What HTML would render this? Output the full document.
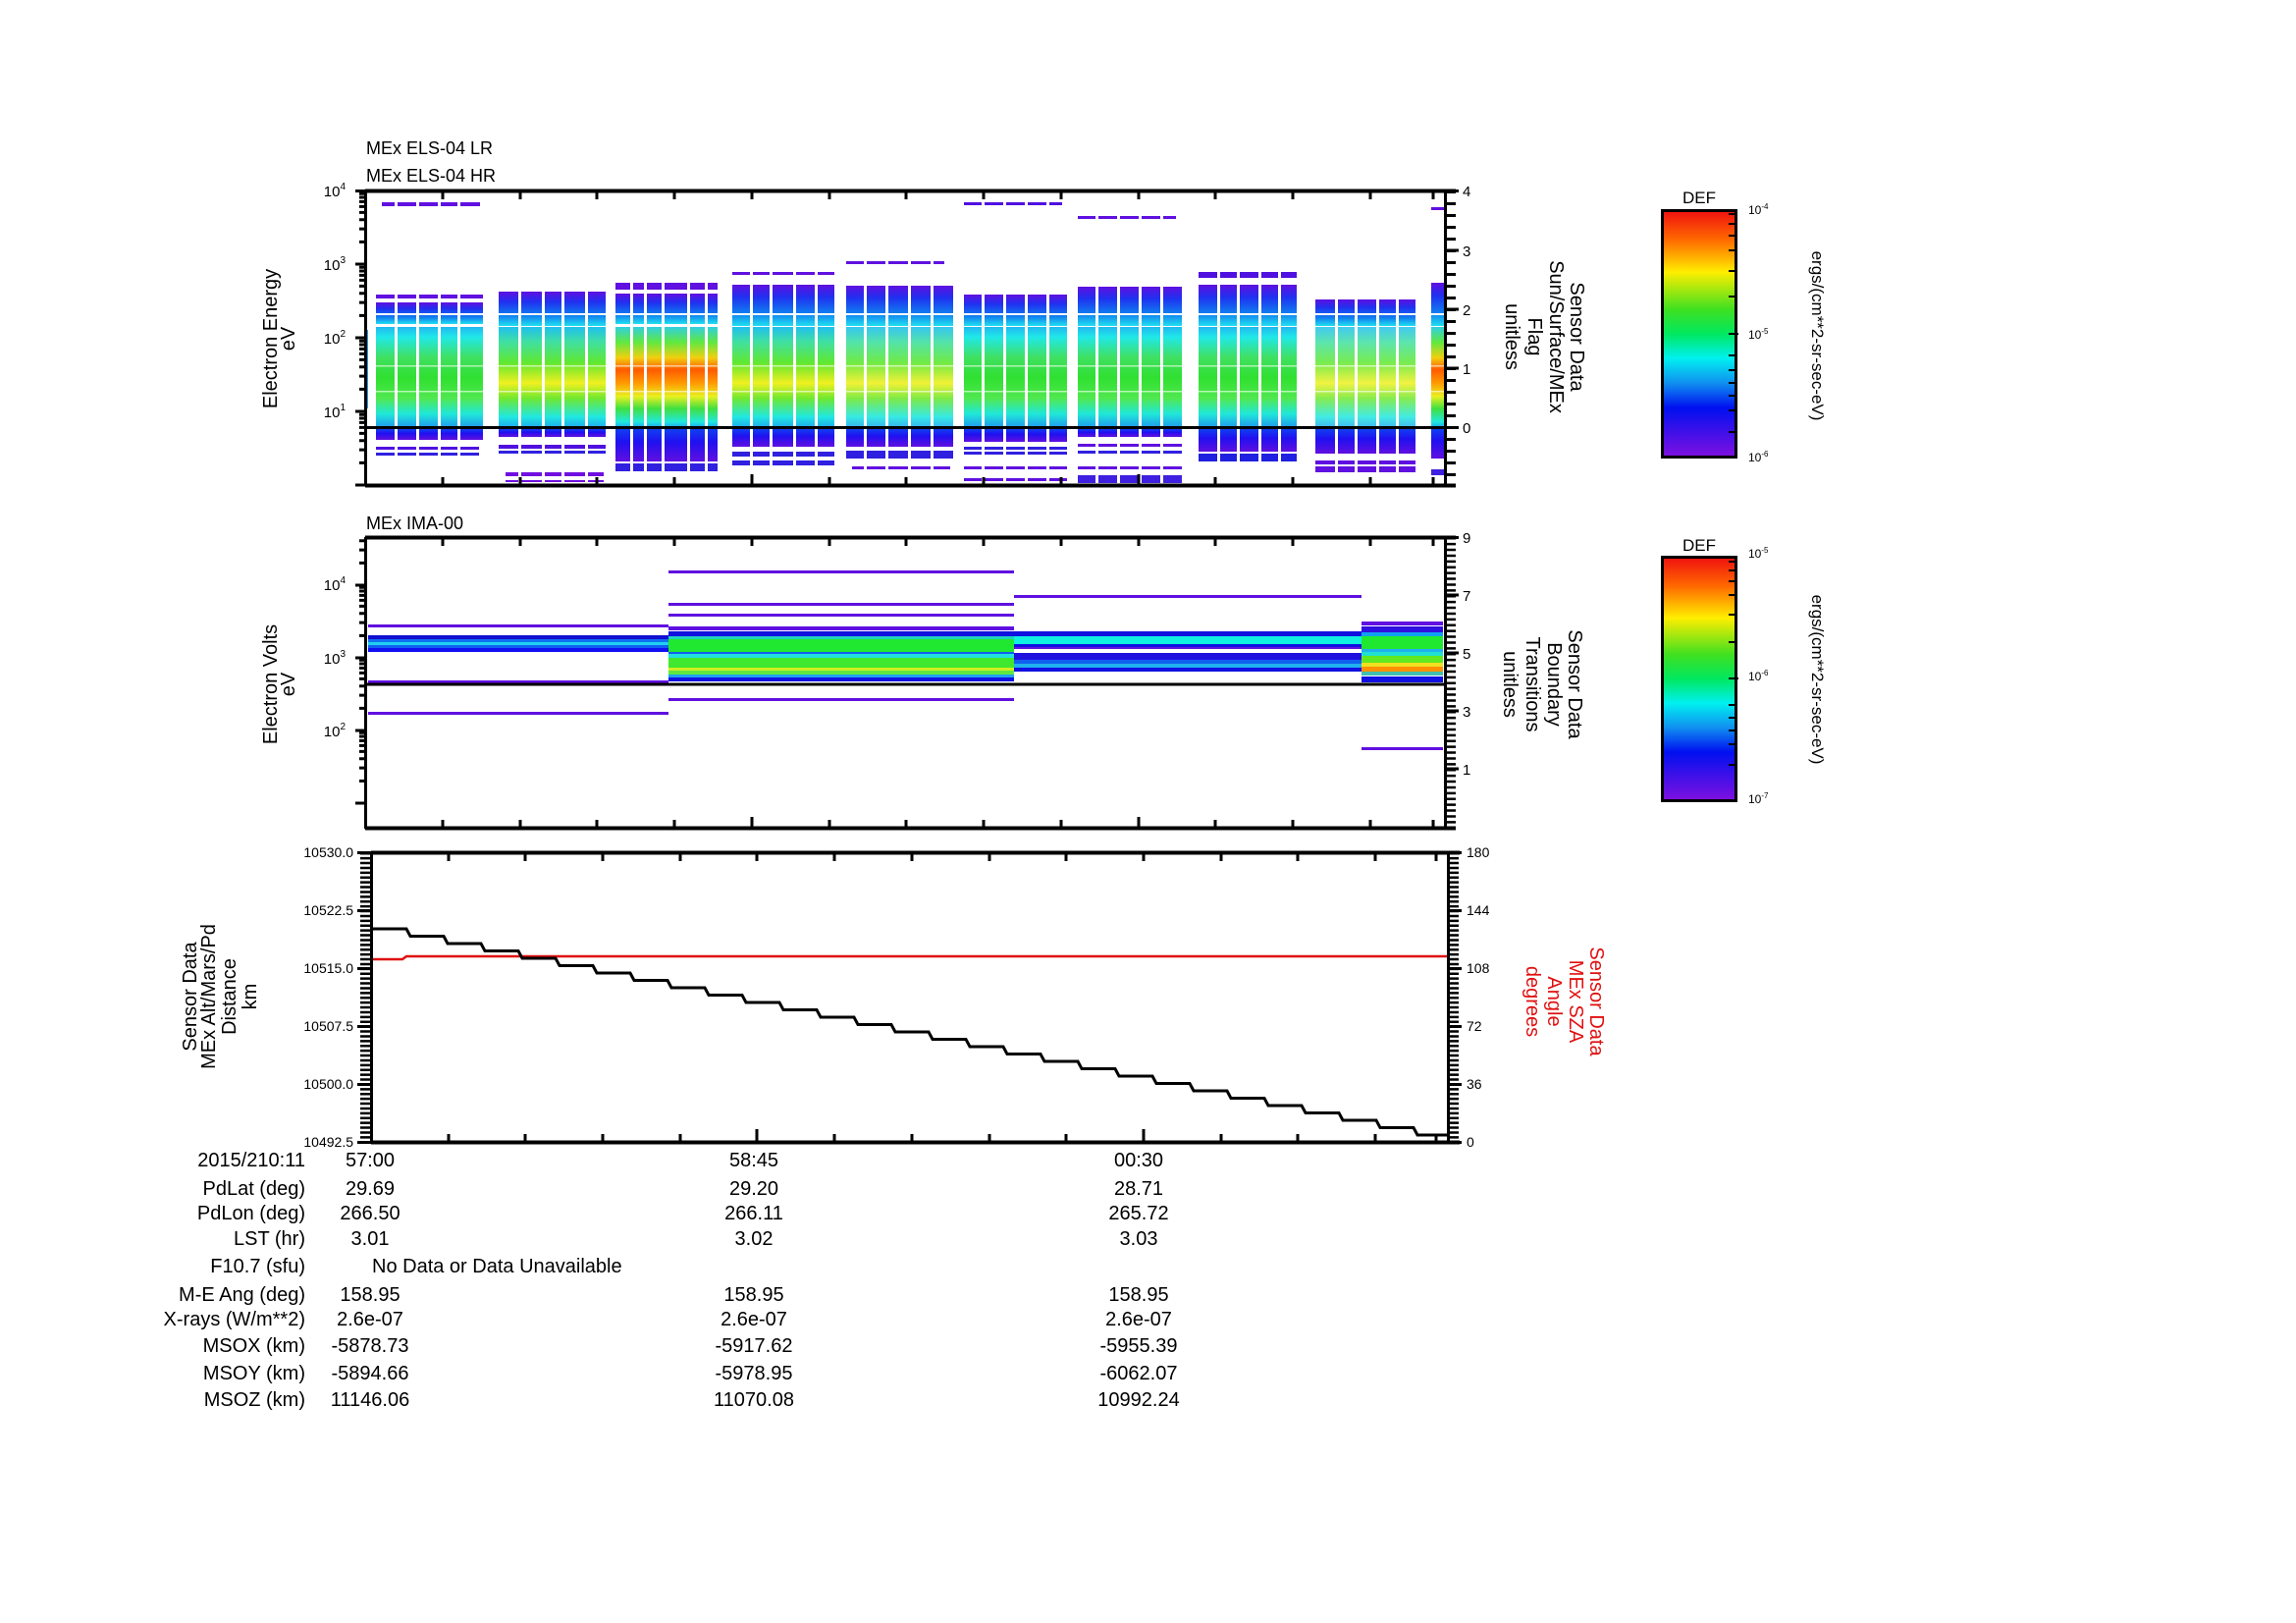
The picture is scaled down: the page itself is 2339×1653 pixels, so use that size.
<!DOCTYPE html>
<html><head><meta charset="utf-8"><style>
html,body{margin:0;padding:0;background:#fff;}
svg{display:block;font-family:"Liberation Sans",Arial,sans-serif;}
</style></head><body>
<svg width="2339" height="1653" viewBox="0 0 2339 1653" xmlns="http://www.w3.org/2000/svg">
<defs>
<clipPath id="c2"><rect x="300" y="547" width="100" height="300"/></clipPath>
<linearGradient id="cbar" x1="0" y1="0" x2="0" y2="1">
<stop offset="0" stop-color="#f01010"/><stop offset="0.12" stop-color="#ff6a00"/><stop offset="0.25" stop-color="#ffee00"/><stop offset="0.4" stop-color="#40e020"/><stop offset="0.5" stop-color="#00e860"/><stop offset="0.6" stop-color="#00f0f0"/><stop offset="0.7" stop-color="#1090f0"/><stop offset="0.8" stop-color="#0010f0"/><stop offset="1" stop-color="#8010e0"/>
</linearGradient>
<linearGradient id="bC" x1="0" y1="0" x2="0" y2="1">
<stop offset="0" stop-color="#20b8f0"/><stop offset="0.1" stop-color="#20e8e8"/><stop offset="0.3" stop-color="#40e060"/><stop offset="0.5" stop-color="#30e030"/><stop offset="0.7" stop-color="#50e850"/><stop offset="0.85" stop-color="#20e8d8"/><stop offset="1" stop-color="#2090f0"/>
</linearGradient>
<linearGradient id="bY" x1="0" y1="0" x2="0" y2="1">
<stop offset="0" stop-color="#20c0f0"/><stop offset="0.15" stop-color="#40e0a0"/><stop offset="0.35" stop-color="#60e830"/><stop offset="0.55" stop-color="#f0f020"/><stop offset="0.7" stop-color="#70e830"/><stop offset="0.88" stop-color="#20e8e0"/><stop offset="1" stop-color="#20a0f0"/>
</linearGradient>
<linearGradient id="bR" x1="0" y1="0" x2="0" y2="1">
<stop offset="0" stop-color="#30d0e0"/><stop offset="0.15" stop-color="#60e840"/><stop offset="0.3" stop-color="#f0d010"/><stop offset="0.42" stop-color="#ff5a00"/><stop offset="0.55" stop-color="#ff9a00"/><stop offset="0.68" stop-color="#e8f020"/><stop offset="0.8" stop-color="#40e040"/><stop offset="0.93" stop-color="#20e8e0"/><stop offset="1" stop-color="#2090f0"/>
</linearGradient>
<linearGradient id="up" x1="0" y1="0" x2="0" y2="1">
<stop offset="0" stop-color="#6010e0"/><stop offset="0.3" stop-color="#2030f0"/><stop offset="0.7" stop-color="#1080f0"/><stop offset="1" stop-color="#20e0f0"/>
</linearGradient>
<linearGradient id="dn" x1="0" y1="0" x2="0" y2="1">
<stop offset="0" stop-color="#1040f0"/><stop offset="0.4" stop-color="#2010f0"/><stop offset="1" stop-color="#6010e0"/>
</linearGradient>
<g id="dec" stroke="#000" stroke-width="3">
<path d="M362,0h10M366,-22.6h6M366,-35.9h6M366,-45.3h6M366,-52.6h6M366,-58.6h6M366,-63.6h6M366,-68h6M366,-71.8h6"/>
</g>
</defs>

<!-- ===== Panel 1 ===== -->
<text x="373" y="157" font-size="18">MEx ELS-04 LR</text>
<text x="373" y="185" font-size="18">MEx ELS-04 HR</text>

<g>
<rect x="383" y="300" width="109" height="4" fill="#6010e0"/>
<rect x="383" y="308" width="109" height="22" fill="url(#up)"/>
<rect x="383" y="333" width="109" height="104" fill="url(#bC)"/>
<rect x="383" y="437" width="109" height="11" fill="url(#dn)"/>
<rect x="383" y="455" width="105" height="3" fill="#5010e0"/><rect x="383" y="461" width="105" height="3" fill="#3020e0"/>
<rect x="389" y="206" width="100" height="4" fill="#6010e0"/>
<rect x="508" y="297" width="109" height="35" fill="url(#up)"/>
<rect x="508" y="333" width="109" height="104" fill="url(#bY)"/>
<rect x="508" y="437" width="109" height="8" fill="url(#dn)"/>
<rect x="508" y="453" width="109" height="4" fill="#5010e0"/><rect x="508" y="459" width="109" height="3" fill="#3020e0"/><rect x="515" y="481" width="100" height="4" fill="#7010e0"/><rect x="515" y="489" width="100" height="2" fill="#7010e0"/>
<rect x="627" y="288" width="104" height="7" fill="#6010e0"/>
<rect x="627" y="299" width="104" height="31" fill="url(#up)"/>
<rect x="627" y="333" width="104" height="104" fill="url(#bR)"/>
<rect x="627" y="437" width="104" height="33" fill="url(#dn)"/>
<rect x="627" y="472" width="104" height="8" fill="#3020e0"/>
<rect x="746" y="277" width="104" height="3" fill="#6010e0"/>
<rect x="746" y="290" width="104" height="42" fill="url(#up)"/>
<rect x="746" y="333" width="104" height="104" fill="url(#bY)"/>
<rect x="746" y="437" width="104" height="18" fill="url(#dn)"/>
<rect x="746" y="460" width="104" height="5" fill="#3020e0"/><rect x="746" y="469" width="104" height="5" fill="#3020e0"/>
<rect x="862" y="266" width="100" height="3" fill="#6010e0"/>
<rect x="862" y="291" width="109" height="41" fill="url(#up)"/>
<rect x="862" y="333" width="109" height="104" fill="url(#bY)" opacity="0.9"/>
<rect x="862" y="437" width="109" height="18" fill="url(#dn)"/>
<rect x="862" y="459" width="109" height="8" fill="#3020e0"/><rect x="868" y="475" width="100" height="3" fill="#6010e0"/>
<rect x="982" y="206" width="100" height="3" fill="#5010e0"/>
<rect x="982" y="300" width="105" height="32" fill="url(#up)"/>
<rect x="982" y="333" width="105" height="104" fill="url(#bC)"/>
<rect x="982" y="437" width="105" height="13" fill="url(#dn)"/>
<rect x="982" y="455" width="105" height="3" fill="#3020e0"/><rect x="982" y="460" width="105" height="3" fill="#3020e0"/><rect x="982" y="475" width="105" height="3" fill="#6010e0"/><rect x="982" y="487" width="105" height="3" fill="#6010e0"/>
<rect x="1098" y="220" width="100" height="3" fill="#6010e0"/>
<rect x="1098" y="292" width="106" height="40" fill="url(#up)"/>
<rect x="1098" y="333" width="106" height="104" fill="url(#bC)"/>
<rect x="1098" y="437" width="106" height="8" fill="url(#dn)"/>
<rect x="1098" y="452" width="106" height="3" fill="#6010e0"/><rect x="1098" y="459" width="106" height="3" fill="#3020e0"/><rect x="1098" y="475" width="106" height="3" fill="#6010e0"/><rect x="1098" y="484" width="106" height="8" fill="#4020e0"/>
<rect x="1221" y="277" width="100" height="6" fill="#5010e0"/>
<rect x="1221" y="290" width="100" height="42" fill="url(#up)"/>
<rect x="1221" y="333" width="100" height="104" fill="url(#bC)"/>
<rect x="1221" y="437" width="100" height="23" fill="url(#dn)"/>
<rect x="1221" y="462" width="100" height="8" fill="#2020e0"/>
<rect x="1340" y="305" width="102" height="27" fill="url(#up)"/>
<rect x="1340" y="333" width="102" height="104" fill="url(#bY)" opacity="0.85"/>
<rect x="1340" y="437" width="102" height="25" fill="url(#dn)"/>
<rect x="1340" y="469" width="102" height="4" fill="#6010e0"/><rect x="1340" y="475" width="102" height="6" fill="#6010e0"/>
<rect x="1458" y="211" width="14" height="3" fill="#6010e0"/>
<rect x="1458" y="288" width="14" height="44" fill="url(#up)"/>
<rect x="1458" y="333" width="14" height="104" fill="url(#bR)"/>
<rect x="1458" y="437" width="14" height="30" fill="url(#dn)"/>
<rect x="1458" y="478" width="14" height="6" fill="#4020e0"/>
<g fill="#fff">
<rect x="402" y="200" width="3" height="300"/><rect x="424" y="200" width="3" height="300"/><rect x="446" y="200" width="3" height="300"/><rect x="466" y="200" width="3" height="300"/>
<rect x="528" y="200" width="3" height="300"/><rect x="552" y="200" width="3" height="300"/><rect x="572" y="200" width="3" height="300"/><rect x="596" y="200" width="3" height="300"/>
<rect x="642" y="200" width="3" height="300"/><rect x="656" y="200" width="3" height="300"/><rect x="674" y="200" width="3" height="300"/><rect x="700" y="200" width="3" height="300"/><rect x="718" y="200" width="3" height="300"/>
<rect x="764" y="200" width="3" height="300"/><rect x="784" y="200" width="3" height="300"/><rect x="808" y="200" width="3" height="300"/><rect x="830" y="200" width="3" height="300"/>
<rect x="880" y="200" width="3" height="300"/><rect x="902" y="200" width="3" height="300"/><rect x="925" y="200" width="3" height="300"/><rect x="948" y="200" width="3" height="300"/>
<rect x="1000" y="200" width="3" height="300"/><rect x="1022" y="200" width="3" height="300"/><rect x="1044" y="200" width="3" height="300"/><rect x="1066" y="200" width="3" height="300"/>
<rect x="1116" y="200" width="3" height="300"/><rect x="1138" y="200" width="3" height="300"/><rect x="1160" y="200" width="3" height="300"/><rect x="1182" y="200" width="3" height="300"/>
<rect x="1240" y="200" width="3" height="300"/><rect x="1260" y="200" width="3" height="300"/><rect x="1282" y="200" width="3" height="300"/><rect x="1302" y="200" width="3" height="300"/>
<rect x="1360" y="200" width="3" height="300"/><rect x="1380" y="200" width="3" height="300"/><rect x="1402" y="200" width="3" height="300"/><rect x="1422" y="200" width="3" height="300"/>
<rect x="380" y="319" width="1100" height="2"/><rect x="380" y="398" width="1100" height="1.5" opacity="0.6"/><rect x="380" y="372" width="1100" height="1.5" opacity="0.6"/>
</g>
</g>
<rect x="372" y="336" width="3" height="80" fill="#20a0f0"/>
<line x1="372" y1="435.5" x2="1472" y2="435.5" stroke="#000" stroke-width="3"/>
<g stroke="#000" fill="none">
<path d="M372,194.5H1483M372,494.5H1483" stroke-width="4"/>
<path d="M372.5,194V495M1472.5,194V495" stroke-width="3"/>
<path d="M451,196v7M530,196v7M608,196v7M687,196v7M766,196v7M845,196v7M923,196v7M1002,196v7M1081,196v7M1160,196v7M1238,196v7M1317,196v7M1396,196v7M1460,196v7" stroke-width="3"/>
<path d="M451,493v-7M530,493v-7M608,493v-7M687,493v-7M766,493v-10M845,493v-7M923,493v-7M1002,493v-7M1081,493v-7M1160,493v-10M1238,493v-7M1317,493v-7M1396,493v-7M1460,493v-7" stroke-width="3"/>
<line x1="1478" y1="194" x2="1478" y2="495" stroke-width="10" stroke-dasharray="3 9"/>
<path d="M1472,194.5h14M1472,255h14M1472,315h14M1472,375h14M1472,435.5h14" stroke-width="3"/>
</g>
<use href="#dec" transform="translate(0,494)"/><use href="#dec" transform="translate(0,419)"/><use href="#dec" transform="translate(0,344)"/><use href="#dec" transform="translate(0,269)"/>
<path d="M362,194.5h10" stroke="#000" stroke-width="3"/>
<g font-size="15" text-anchor="end">
<text x="352" y="200">10<tspan font-size="10" dy="-7">4</tspan></text>
<text x="352" y="275">10<tspan font-size="10" dy="-7">3</tspan></text>
<text x="352" y="350">10<tspan font-size="10" dy="-7">2</tspan></text>
<text x="352" y="425">10<tspan font-size="10" dy="-7">1</tspan></text>
</g>
<g font-size="15">
<text x="1490" y="200">4</text><text x="1490" y="261">3</text><text x="1490" y="321">2</text><text x="1490" y="381">1</text><text x="1490" y="441">0</text>
</g>
<g font-size="20" text-anchor="middle">
<text transform="translate(282,345) rotate(-90)">Electron Energy</text>
<text transform="translate(300,345) rotate(-90)">eV</text>
</g>
<g font-size="20" text-anchor="middle">
<text transform="translate(1600,343) rotate(90)">Sensor Data</text>
<text transform="translate(1579,343) rotate(90)">Sun/Surface/MEx</text>
<text transform="translate(1557,343) rotate(90)">Flag</text>
<text transform="translate(1534,343) rotate(90)">unitless</text>
</g>
<text x="1731" y="207" font-size="17" text-anchor="middle">DEF</text>
<rect x="1693.5" y="214.5" width="75" height="251" fill="url(#cbar)" stroke="#000" stroke-width="3"/>
<g stroke="#000" stroke-width="2"><path d="M1761,218h7M1761,228h7M1761,240h7M1761,255h7M1761,276h7M1761,302h7M1761,340h10M1761,362h7M1761,377h7M1761,390h7M1761,403h7M1761,418h7M1761,440h7"/></g>
<g font-size="12"><text x="1781" y="218">10<tspan font-size="8" dy="-5">-4</tspan></text><text x="1781" y="345">10<tspan font-size="8" dy="-5">-5</tspan></text><text x="1781" y="470">10<tspan font-size="8" dy="-5">-6</tspan></text></g>
<text transform="translate(1846,342) rotate(90)" font-size="17" text-anchor="middle">ergs/(cm**2-sr-sec-eV)</text>

<!-- ===== Panel 2 ===== -->
<text x="373" y="539" font-size="18">MEx IMA-00</text>
<rect x="375" y="636" width="306" height="3" fill="#6010e0"/>
<rect x="375" y="647" width="306" height="4" fill="#1010d0"/><rect x="375" y="651" width="306" height="3" fill="#1070f0"/><rect x="375" y="654" width="306" height="3" fill="#20d0f0"/><rect x="375" y="657" width="306" height="3" fill="#1060f0"/><rect x="375" y="660" width="306" height="4" fill="#1010f0"/>
<rect x="375" y="693" width="306" height="3" fill="#6010e0"/>
<rect x="375" y="725" width="306" height="3" fill="#6010e0"/>
<rect x="681" y="581" width="352" height="3" fill="#6010e0"/><rect x="681" y="614" width="352" height="3" fill="#6010e0"/><rect x="681" y="625" width="352" height="3" fill="#6010e0"/><rect x="681" y="638" width="352" height="4" fill="#6010e0"/>
<rect x="681" y="643" width="352" height="5" fill="#1010e0"/><rect x="681" y="648" width="352" height="3" fill="#20d0c0"/><rect x="681" y="651" width="352" height="13" fill="#20e830"/><rect x="681" y="664" width="352" height="2" fill="#1060f0"/><rect x="681" y="666" width="352" height="4" fill="#20e0e0"/><rect x="681" y="670" width="352" height="10" fill="#40e830"/><rect x="681" y="680" width="352" height="3" fill="#d0f020"/><rect x="681" y="683" width="352" height="4" fill="#60e840"/><rect x="681" y="687" width="352" height="3" fill="#20a0f0"/><rect x="681" y="690" width="352" height="4" fill="#1010e0"/>
<rect x="681" y="711" width="352" height="3" fill="#6010e0"/>
<rect x="1033" y="606" width="354" height="3" fill="#6010e0"/>
<rect x="1033" y="643" width="354" height="5" fill="#1010e0"/><rect x="1033" y="648" width="354" height="8" fill="#10f0e0"/><rect x="1033" y="656" width="354" height="3" fill="#1010e0"/><rect x="1033" y="659" width="354" height="2" fill="#6010e0"/>
<rect x="1033" y="665" width="354" height="7" fill="#2010e0"/><rect x="1033" y="672" width="354" height="4" fill="#1060f0"/><rect x="1033" y="676" width="354" height="4" fill="#20b0f0"/><rect x="1033" y="680" width="354" height="4" fill="#1010e0"/>
<rect x="1387" y="633" width="83" height="4" fill="#6010e0"/><rect x="1387" y="638" width="83" height="6" fill="#3010e0"/><rect x="1387" y="644" width="83" height="4" fill="#10a0f0"/><rect x="1387" y="648" width="83" height="13" fill="#20e830"/><rect x="1387" y="661" width="83" height="3" fill="#20b0f0"/><rect x="1387" y="664" width="83" height="4" fill="#20e0d0"/><rect x="1387" y="668" width="83" height="7" fill="#60e820"/><rect x="1387" y="675" width="83" height="4" fill="#f0e020"/><rect x="1387" y="679" width="83" height="5" fill="#ff9000"/><rect x="1387" y="684" width="83" height="4" fill="#40c0b0"/><rect x="1387" y="689" width="83" height="6" fill="#1010e0"/>
<rect x="1387" y="761" width="83" height="3" fill="#6010e0"/>
<line x1="372" y1="697" x2="1472" y2="697" stroke="#000" stroke-width="3"/>
<g stroke="#000" fill="none">
<path d="M372,547.5H1483M372,843.5H1483" stroke-width="4"/>
<path d="M372.5,547V844M1472.5,547V844" stroke-width="3"/>
<path d="M451,549v7M530,549v7M608,549v7M687,549v7M766,549v7M845,549v7M923,549v7M1002,549v7M1081,549v7M1160,549v7M1238,549v7M1317,549v7M1396,549v7M1460,549v7" stroke-width="3"/>
<path d="M451,842v-7M530,842v-7M608,842v-7M687,842v-7M766,842v-10M845,842v-7M923,842v-7M1002,842v-7M1081,842v-7M1160,842v-10M1238,842v-7M1317,842v-7M1396,842v-7M1460,842v-7" stroke-width="3"/>
<line x1="1478" y1="547" x2="1478" y2="844" stroke-width="10" stroke-dasharray="2.5 3.4"/>
<path d="M1472,547.5h14M1472,606h14M1472,665h14M1472,724h14M1472,783h14" stroke-width="3"/>
</g>
<g clip-path="url(#c2)">
<use href="#dec" transform="translate(0,818)"/><use href="#dec" transform="translate(0,744)"/><use href="#dec" transform="translate(0,670)"/><use href="#dec" transform="translate(0,596)"/>
</g>
<g font-size="15" text-anchor="end">
<text x="352" y="601">10<tspan font-size="10" dy="-7">4</tspan></text>
<text x="352" y="676">10<tspan font-size="10" dy="-7">3</tspan></text>
<text x="352" y="750">10<tspan font-size="10" dy="-7">2</tspan></text>
</g>
<g font-size="15">
<text x="1490" y="553">9</text><text x="1490" y="612">7</text><text x="1490" y="671">5</text><text x="1490" y="730">3</text><text x="1490" y="789">1</text>
</g>
<g font-size="20" text-anchor="middle">
<text transform="translate(282,697) rotate(-90)">Electron Volts</text>
<text transform="translate(300,697) rotate(-90)">eV</text>
</g>
<g font-size="20" text-anchor="middle">
<text transform="translate(1598,697) rotate(90)">Sensor Data</text>
<text transform="translate(1577,697) rotate(90)">Boundary</text>
<text transform="translate(1555,697) rotate(90)">Transitions</text>
<text transform="translate(1532,697) rotate(90)">unitless</text>
</g>
<text x="1731" y="561" font-size="17" text-anchor="middle">DEF</text>
<rect x="1693.5" y="567.5" width="75" height="248" fill="url(#cbar)" stroke="#000" stroke-width="3"/>
<g stroke="#000" stroke-width="2"><path d="M1761,572h7M1761,581h7M1761,592h7M1761,606h7M1761,626h7M1761,654h7M1761,691h10M1761,718h7M1761,731h7M1761,744h7M1761,758h7M1761,779h7"/></g>
<g font-size="12"><text x="1781" y="568">10<tspan font-size="8" dy="-5">-5</tspan></text><text x="1781" y="693">10<tspan font-size="8" dy="-5">-6</tspan></text><text x="1781" y="818">10<tspan font-size="8" dy="-5">-7</tspan></text></g>
<text transform="translate(1846,692) rotate(90)" font-size="17" text-anchor="middle">ergs/(cm**2-sr-sec-eV)</text>

<!-- ===== Panel 3 ===== -->
<polyline points="380,977 410,977 414,974 1475,974" fill="none" stroke="#e01010" stroke-width="2.5"/>
<path d="M380,946h34l4,7.5h34l4,7.5h34l4,7.5h34l4,7.5h34l4,7.5h34l4,7.5h34l4,7.5h34l4,7.5h34l4,7.5h34l4,7.5h34l4,7.5h34l4,7.5h34l4,7.5h34l4,7.5h34l4,7.5h34l4,7.5h34l4,7.5h34l4,7.5h34l4,7.5h34l4,7.5h34l4,7.5h34l4,7.5h34l4,7.5h34l4,7.5h34l4,7.5h34l4,7.5h34l4,7.5h34l4,7.5h31" fill="none" stroke="#000" stroke-width="3"/>
<g stroke="#000" fill="none">
<path d="M378,868.5H1487M378,1163.5H1487" stroke-width="4"/>
<path d="M378.5,868V1164M1475.5,868V1164" stroke-width="3"/>
<path d="M457,870v7M535,870v7M614,870v7M693,870v7M771,870v7M850,870v7M929,870v7M1008,870v7M1086,870v7M1165,870v7M1244,870v7M1322,870v7M1401,870v7M1463,870v7" stroke-width="3"/>
<path d="M457,1162v-7M535,1162v-7M614,1162v-7M693,1162v-7M771,1162v-12M850,1162v-7M929,1162v-7M1008,1162v-7M1086,1162v-7M1165,1162v-12M1244,1162v-7M1322,1162v-7M1401,1162v-7M1463,1162v-7" stroke-width="3"/>
<line x1="372" y1="868" x2="372" y2="1164" stroke-width="10" stroke-dasharray="2.5 2.4"/>
<line x1="1481" y1="868" x2="1481" y2="1164" stroke-width="10" stroke-dasharray="2.5 2.4"/>
<path d="M364,868.5h14M364,927.5h14M364,986.5h14M364,1045.5h14M364,1104.5h14M364,1163.5h14" stroke-width="3"/>
<path d="M1475,868.5h14M1475,927.5h14M1475,986.5h14M1475,1045.5h14M1475,1104.5h14M1475,1163.5h14" stroke-width="3"/>
</g>
<g font-size="14" text-anchor="end">
<text x="360" y="873">10530.0</text><text x="360" y="932">10522.5</text><text x="360" y="991">10515.0</text><text x="360" y="1050">10507.5</text><text x="360" y="1109">10500.0</text><text x="360" y="1168">10492.5</text>
</g>
<g font-size="14">
<text x="1494" y="873">180</text><text x="1494" y="932">144</text><text x="1494" y="991">108</text><text x="1494" y="1050">72</text><text x="1494" y="1109">36</text><text x="1494" y="1168">0</text>
</g>
<g font-size="20" text-anchor="middle">
<text transform="translate(200,1015) rotate(-90)">Sensor Data</text>
<text transform="translate(219,1015) rotate(-90)">MEx Alt/Mars/Pd</text>
<text transform="translate(240,1015) rotate(-90)">Distance</text>
<text transform="translate(261,1015) rotate(-90)">km</text>
</g>
<g font-size="20" text-anchor="middle" fill="#e01010">
<text transform="translate(1620,1020) rotate(90)">Sensor Data</text>
<text transform="translate(1599,1020) rotate(90)">MEx SZA</text>
<text transform="translate(1577,1020) rotate(90)">Angle</text>
<text transform="translate(1555,1020) rotate(90)">degrees</text>
</g>

<g font-size="20">
<g text-anchor="end">
<text x="311" y="1188">2015/210:11</text>
<text x="311" y="1217">PdLat (deg)</text>
<text x="311" y="1242">PdLon (deg)</text>
<text x="311" y="1268">LST (hr)</text>
<text x="311" y="1296">F10.7 (sfu)</text>
<text x="311" y="1325">M-E Ang (deg)</text>
<text x="311" y="1350">X-rays (W/m**2)</text>
<text x="311" y="1377">MSOX (km)</text>
<text x="311" y="1405">MSOY (km)</text>
<text x="311" y="1432">MSOZ (km)</text>
</g>
<g text-anchor="middle">
<text x="377" y="1188">57:00</text><text x="768" y="1188">58:45</text><text x="1160" y="1188">00:30</text>
<text x="377" y="1217">29.69</text><text x="768" y="1217">29.20</text><text x="1160" y="1217">28.71</text>
<text x="377" y="1242">266.50</text><text x="768" y="1242">266.11</text><text x="1160" y="1242">265.72</text>
<text x="377" y="1268">3.01</text><text x="768" y="1268">3.02</text><text x="1160" y="1268">3.03</text>
<text x="377" y="1325">158.95</text><text x="768" y="1325">158.95</text><text x="1160" y="1325">158.95</text>
<text x="377" y="1350">2.6e-07</text><text x="768" y="1350">2.6e-07</text><text x="1160" y="1350">2.6e-07</text>
<text x="377" y="1377">-5878.73</text><text x="768" y="1377">-5917.62</text><text x="1160" y="1377">-5955.39</text>
<text x="377" y="1405">-5894.66</text><text x="768" y="1405">-5978.95</text><text x="1160" y="1405">-6062.07</text>
<text x="377" y="1432">11146.06</text><text x="768" y="1432">11070.08</text><text x="1160" y="1432">10992.24</text>
</g>
<text x="379" y="1296">No Data or Data Unavailable</text>
</g>
</svg>
</body></html>
